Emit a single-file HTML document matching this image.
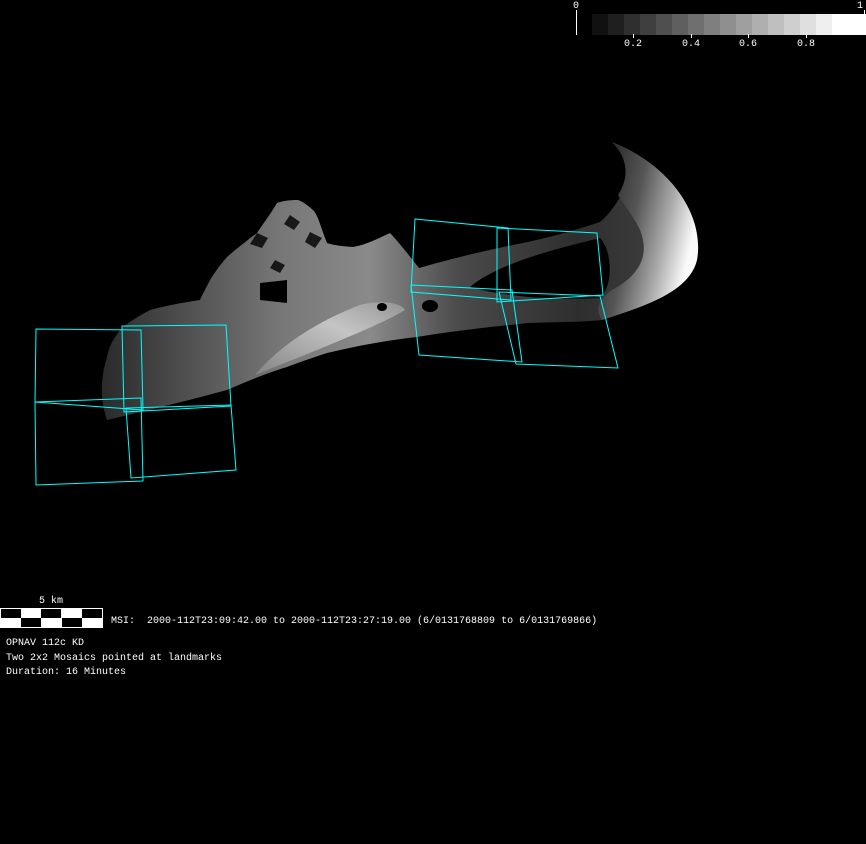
<!DOCTYPE html>
<html><head><style>
html,body{margin:0;padding:0;background:#000;}
body{width:866px;height:844px;position:relative;overflow:hidden;font-family:"Liberation Mono",monospace;color:#fff;}
.t{position:absolute;font-size:10px;line-height:14.5px;white-space:pre;}
</style></head><body>
<svg width="866" height="844" style="position:absolute;left:0;top:0">
<defs>
<linearGradient id="body" x1="0" y1="0" x2="1" y2="0">
<stop offset="0" stop-color="#2a2a2a"/>
<stop offset="0.12" stop-color="#4a4a4a"/>
<stop offset="0.3" stop-color="#777"/>
<stop offset="0.45" stop-color="#8a8a8a"/>
<stop offset="0.6" stop-color="#4a4a4a"/>
<stop offset="0.8" stop-color="#2e2e2e"/>
<stop offset="1" stop-color="#444"/>
</linearGradient>
<linearGradient id="hook" x1="0" y1="0" x2="1" y2="0.4">
<stop offset="0" stop-color="#1a1a1a"/>
<stop offset="0.45" stop-color="#555"/>
<stop offset="0.75" stop-color="#aaa"/>
<stop offset="1" stop-color="#fafafa"/>
</linearGradient>
<linearGradient id="streak" x1="0" y1="1" x2="1" y2="0">
<stop offset="0" stop-color="#888"/>
<stop offset="0.6" stop-color="#d0d0d0"/>
<stop offset="1" stop-color="#999"/>
</linearGradient>
</defs>
<path d="M107,420 C150,410 190,400 227,390 C250,380 270,372 287,367 C300,362 315,357 327,353 C360,345 390,340 417,337 C460,330 500,326 528,323 C560,322 585,322 602,320 C650,305 690,290 697,260 C705,215 670,165 612,142 C628,160 632,175 628,185 C618,200 612,212 600,222 C570,232 540,240 508,246 C470,254 440,262 419,268 C405,250 395,238 390,233 C375,240 365,245 353,247 C340,246 333,245 327,243 C320,225 318,215 313,210 C305,203 300,200 297,200 C290,200 282,201 277,203 C270,215 262,225 257,233 C245,242 235,250 227,257 C220,265 215,272 210,280 C205,290 202,295 200,300 C180,303 165,306 150,310 C135,318 125,325 120,330 C112,340 108,350 107,357 C100,380 100,400 107,420 Z" fill="url(#body)"/>
<path d="M255,375 C280,345 320,320 360,305 C380,300 400,302 405,310 C380,325 330,345 255,375 Z" fill="url(#streak)" opacity="0.85"/>
<path d="M612,142 C670,165 705,215 697,260 C690,290 650,305 602,320 C595,310 598,300 612,290 C640,275 650,255 640,230 C630,210 620,200 618,195 C628,180 630,160 612,142 Z" fill="url(#hook)"/>
<path d="M470,287 C500,262 560,248 600,238 C612,250 614,285 600,298 C560,300 510,298 470,287 Z" fill="#000"/>
<path d="M260,283 L287,280 L287,303 L260,300 Z" fill="#000"/>
<g fill="#000" opacity="0.8">
<path d="M257,233 L268,238 L262,248 L250,244 Z"/>
<path d="M290,215 L300,222 L294,230 L284,224 Z"/>
<path d="M310,232 L322,238 L315,248 L305,242 Z"/>
<path d="M275,260 L285,265 L280,273 L270,268 Z"/>
</g>
<ellipse cx="430" cy="306" rx="8" ry="6" fill="#000"/>
<ellipse cx="382" cy="307" rx="5" ry="4" fill="#000"/>
<g fill="none" stroke="#00ffff" stroke-width="1">
<polygon points="36,329 141,330 143,410 35,402"/>
<polygon points="122,326 226,325 231,406 124,412"/>
<polygon points="35,402 141,398 143,481 36,485"/>
<polygon points="126,408 231,405 236,470 131,478"/>
<polygon points="415,219 508,228 511,300 411,292"/>
<polygon points="497,228 597,233 603,295 497,302"/>
<polygon points="411,285 512,290 522,362 419,355"/>
<polygon points="499,292 600,296 618,368 516,364"/>
</g>
<g>
<rect x="592" y="14" width="16" height="21" fill="#111"/>
<rect x="608" y="14" width="16" height="21" fill="#1f1f1f"/>
<rect x="624" y="14" width="16" height="21" fill="#2f2f2f"/>
<rect x="640" y="14" width="16" height="21" fill="#3f3f3f"/>
<rect x="656" y="14" width="16" height="21" fill="#4f4f4f"/>
<rect x="672" y="14" width="16" height="21" fill="#5f5f5f"/>
<rect x="688" y="14" width="16" height="21" fill="#6f6f6f"/>
<rect x="704" y="14" width="16" height="21" fill="#7f7f7f"/>
<rect x="720" y="14" width="16" height="21" fill="#8f8f8f"/>
<rect x="736" y="14" width="16" height="21" fill="#9f9f9f"/>
<rect x="752" y="14" width="16" height="21" fill="#afafaf"/>
<rect x="768" y="14" width="16" height="21" fill="#bfbfbf"/>
<rect x="784" y="14" width="16" height="21" fill="#cfcfcf"/>
<rect x="800" y="14" width="16" height="21" fill="#dfdfdf"/>
<rect x="816" y="14" width="16" height="21" fill="#efefef"/>
<rect x="832" y="14" width="34" height="21" fill="#fff"/>
</g>
<rect x="576" y="10" width="1" height="25" fill="#fff"/>
<rect x="864" y="10" width="1" height="25" fill="#fff"/>
<g fill="#fff"><rect x="633" y="34" width="1" height="4"/><rect x="691" y="34" width="1" height="4"/><rect x="748" y="34" width="1" height="4"/><rect x="806" y="34" width="1" height="4"/></g>
<rect x="0.5" y="608.5" width="102" height="19" fill="#fff" stroke="#fff"/>
<g fill="#000">
<rect x="1" y="609" width="20" height="9"/><rect x="41" y="609" width="20" height="9"/><rect x="82" y="609" width="20" height="9"/>
<rect x="21" y="618" width="20" height="9"/><rect x="62" y="618" width="20" height="9"/>
</g>
</svg>
<div class="t" style="left:573px;top:0px">0</div>
<div class="t" style="left:857px;top:0px">1</div>
<div class="t" style="left:624px;top:38px">0.2</div>
<div class="t" style="left:682px;top:38px">0.4</div>
<div class="t" style="left:739px;top:38px">0.6</div>
<div class="t" style="left:797px;top:38px">0.8</div>
<div class="t" style="left:39px;top:595px">5 km</div>
<div class="t" style="left:111px;top:615px">MSI:  2000-112T23:09:42.00 to 2000-112T23:27:19.00 (6/0131768809 to 6/0131769866)</div>
<div class="t" style="left:6px;top:637px">OPNAV 112c KD
Two 2x2 Mosaics pointed at landmarks
Duration: 16 Minutes</div>
</body></html>
